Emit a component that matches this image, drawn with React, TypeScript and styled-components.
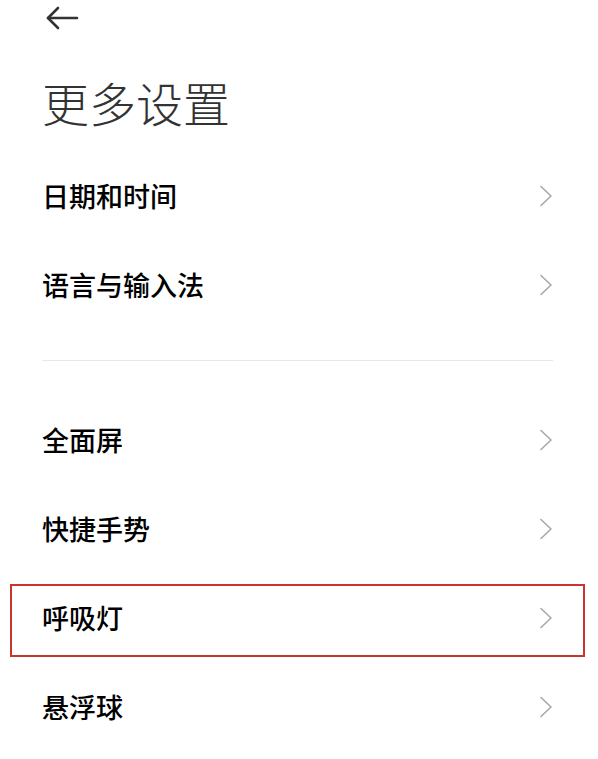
import React from 'react'
import styled, { createGlobalStyle } from 'styled-components'

const GlobalStyle = createGlobalStyle`
  html, body {
    margin: 0;
    padding: 0;
    background: #ffffff;
  }
  body {
    font-family: "Noto Sans CJK SC", "Noto Sans", sans-serif;
    -webkit-font-smoothing: antialiased;
  }
`

const Page = styled.div`
  width: 598px;
  height: 759px;
  box-sizing: border-box;
  padding: 0 45px 0 42px;
  overflow: hidden;
`

const Header = styled.div`
  height: 36px;
  display: flex;
  align-items: flex-start;
`

const BackButton = styled.button`
  margin: 6px 0 0 3px;
  padding: 0;
  border: none;
  background: none;
  width: 34px;
  height: 24px;
  display: flex;
  align-items: center;
  justify-content: center;
  cursor: pointer;
`

const Title = styled.h1`
  margin: 42px 0 0 0;
  font-size: 47px;
  line-height: 47px;
  font-weight: 300;
  color: #333333;
  letter-spacing: 0;
`

const List = styled.div`
  margin-top: 26px;
  display: flex;
  flex-direction: column;
`

const Row = styled.div<{ highlighted?: boolean }>`
  position: relative;
  height: 89px;
  display: flex;
  align-items: center;
  justify-content: space-between;
  cursor: pointer;

  ${({ highlighted }) =>
    highlighted &&
    `
    &::after {
      content: '';
      position: absolute;
      top: 11px;
      bottom: 5px;
      left: -32px;
      right: -32px;
      border: 2px solid #c8352f;
      pointer-events: none;
    }
  `}
`

const Label = styled.span`
  font-size: 27px;
  line-height: 27px;
  font-weight: 500;
  color: #000000;
`

const Divider = styled.div`
  height: 1px;
  background: #e8e8e8;
  margin: 31px 0 34px 0;
`

const Chevron = () => (
  <svg width="14" height="22" viewBox="0 0 14 22" fill="none">
    <polyline points="2,1.5 12,11 2,20.5" stroke="#a8a8a8" strokeWidth="1.6" strokeLinecap="round" strokeLinejoin="round" />
  </svg>
)

const BackArrow = () => (
  <svg width="34" height="24" viewBox="0 0 34 24" fill="none">
    <line x1="3" y1="12" x2="32" y2="12" stroke="#333" strokeWidth="2.6" strokeLinecap="round" />
    <polyline points="13,2 3,12 13,22" stroke="#333" strokeWidth="2.6" strokeLinecap="round" strokeLinejoin="round" />
  </svg>
)

interface Item {
  label: string
  highlighted?: boolean
}

const groups: Item[][] = [
  [{ label: '日期和时间' }, { label: '语言与输入法' }],
  [{ label: '全面屏' }, { label: '快捷手势' }, { label: '呼吸灯', highlighted: true }, { label: '悬浮球' }],
]

export default function App() {
  return (
    <>
      <GlobalStyle />
      <Page>
        <Header>
          <BackButton aria-label="返回">
            <BackArrow />
          </BackButton>
        </Header>
        <Title>更多设置</Title>
        <List>
          {groups.map((group, gi) => (
            <React.Fragment key={gi}>
              {gi > 0 && <Divider />}
              {group.map(item => (
                <Row key={item.label} highlighted={item.highlighted}>
                  <Label>{item.label}</Label>
                  <Chevron />
                </Row>
              ))}
            </React.Fragment>
          ))}
        </List>
      </Page>
    </>
  )
}
